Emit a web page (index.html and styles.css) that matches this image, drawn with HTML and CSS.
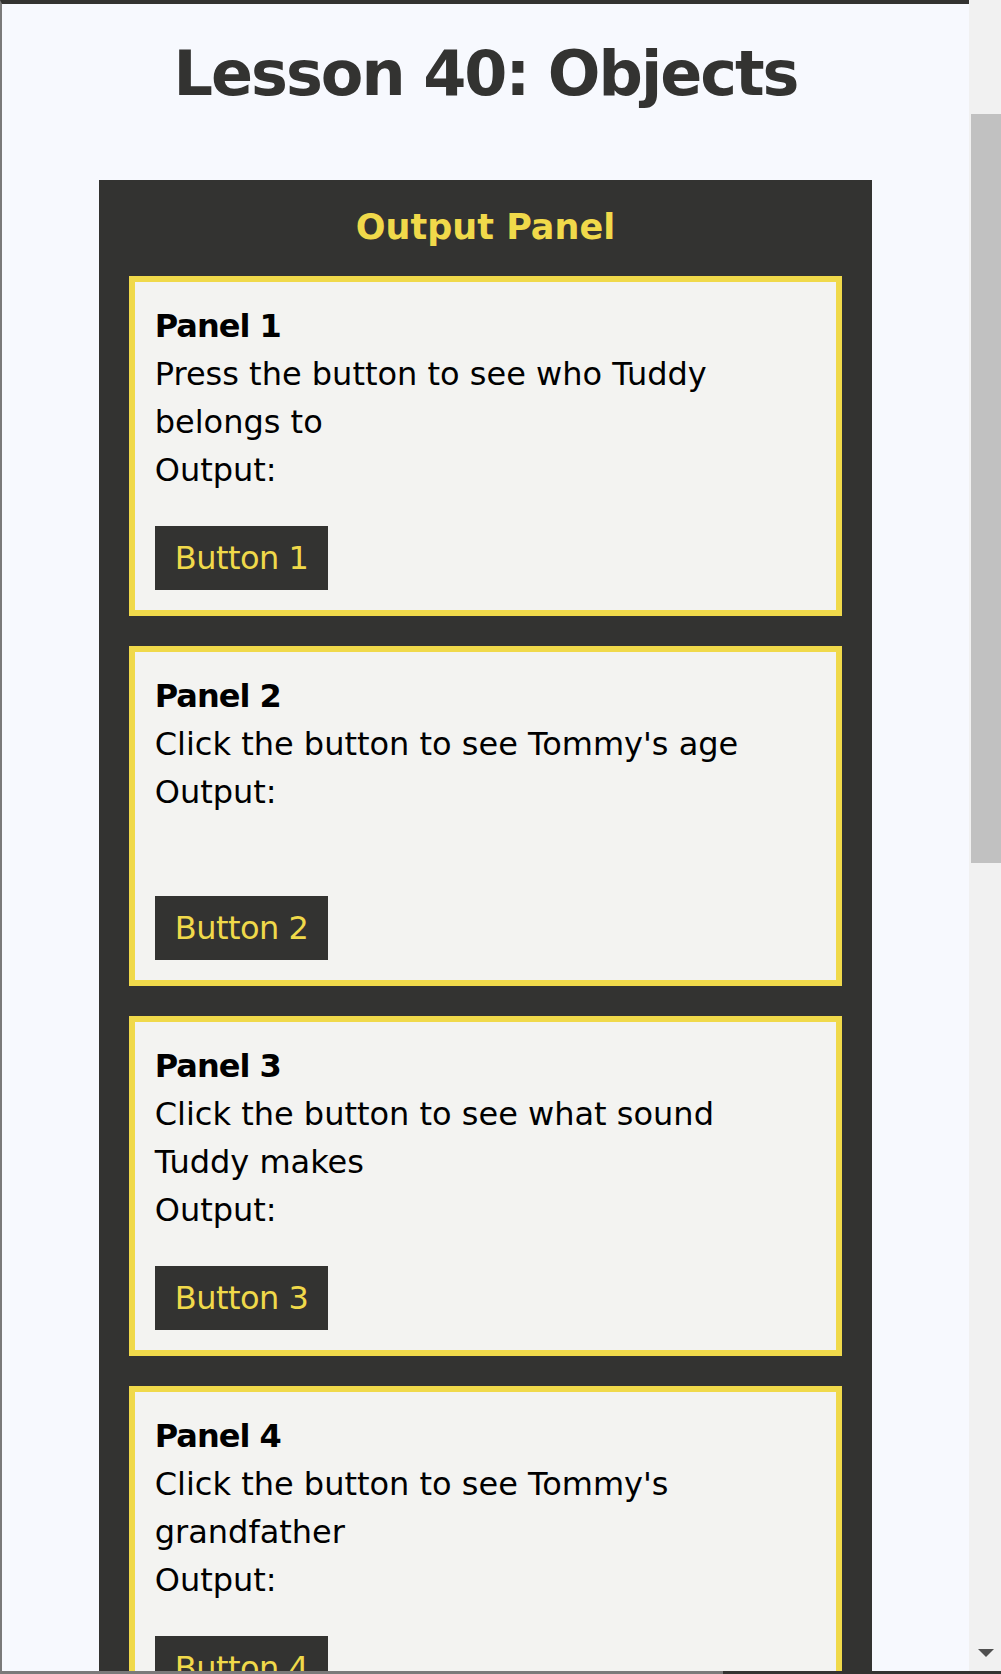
FILE: index.html
```html
<!DOCTYPE html>
<html lang="en">
<head>
    <meta charset="UTF-8">
    <meta name="viewport" content="width=device-width, initial-scale=1.0">
    <title>Lesson 40: Objects</title>
    <link rel="stylesheet" href="styles.css">
</head>
<body>
    <div class="screen">
        <div class="viewport">
            <div class="page">
                <h1>Lesson 40: Objects</h1>
                <div class="output-panel">
                    <h2>Output Panel</h2>

                    <div class="card">
                        <p class="card-title">Panel 1</p>
                        <p>Press the button to see who Tuddy belongs to</p>
                        <p>Output: <span id="output1"></span></p>
                        <button class="btn">Button 1</button>
                    </div>

                    <div class="card">
                        <p class="card-title">Panel 2</p>
                        <p>Click the button to see Tommy's age</p>
                        <p>Output: <span id="output2"></span></p>
                        <button class="btn">Button 2</button>
                    </div>

                    <div class="card">
                        <p class="card-title">Panel 3</p>
                        <p>Click the button to see what sound Tuddy makes</p>
                        <p>Output: <span id="output3"></span></p>
                        <button class="btn">Button 3</button>
                    </div>

                    <div class="card">
                        <p class="card-title">Panel 4</p>
                        <p>Click the button to see Tommy's grandfather</p>
                        <p>Output: <span id="output4"></span></p>
                        <button class="btn">Button 4</button>
                    </div>
                </div>
            </div>
            <div class="scrollbar">
                <div class="thumb"></div>
                <div class="arrow-down"></div>
            </div>
        </div>
        <div class="frame-bottom"></div>
    </div>
</body>
</html>
```

FILE: styles.css
```css
body {
    margin: 0;
    background-color: #f7f9fe;
    font-family: "DejaVu Sans", sans-serif;
}

.screen {
    height: 1674px;
    display: flex;
    flex-direction: column;
    overflow: hidden;
}

.viewport {
    flex: 1;
    min-height: 0;
    display: flex;
}

.page {
    width: 967px;
    border-top: 4px solid #333331;
    border-left: 2px solid #7a7a7a;
    background-color: #f7f9fe;
    overflow: hidden;
}

h1 {
    margin: 30px 0 66px;
    font-size: 62px;
    line-height: 80px;
    letter-spacing: -2px;
    text-align: center;
    color: #333331;
}

.output-panel {
    width: 80%;
    margin: 0 auto;
    padding: 23px 30px 30px;
    box-sizing: border-box;
    background-color: #333331;
}

h2 {
    margin: 0 0 25px;
    font-size: 35px;
    line-height: 48px;
    text-align: center;
    color: #f0d94a;
}

.card {
    height: 340px;
    box-sizing: border-box;
    margin-bottom: 30px;
    padding: 20px;
    border: 6px solid #f0d94a;
    background-color: #f3f3f1;
    display: flex;
    flex-direction: column;
    align-items: flex-start;
}

.card p {
    margin: 0;
    font-size: 32px;
    line-height: 48px;
    color: #000;
}

.card .card-title {
    font-weight: bold;
    letter-spacing: -1px;
}

.btn {
    margin-top: auto;
    padding: 12px 20px;
    border: none;
    background-color: #333331;
    color: #f0d94a;
    font-family: inherit;
    font-size: 32px;
    line-height: 40px;
    letter-spacing: -0.5px;
    cursor: pointer;
}

.scrollbar {
    width: 32px;
    background-color: #f1f1f1;
    display: flex;
    flex-direction: column;
    align-items: flex-end;
}

.thumb {
    width: 30px;
    height: 749px;
    margin-top: 114px;
    background-color: #c1c1c1;
}

.arrow-down {
    margin: auto 7px 14px 0;
    width: 0;
    height: 0;
    border-left: 8px solid transparent;
    border-right: 8px solid transparent;
    border-top: 8px solid #505050;
}

.frame-bottom {
    height: 3px;
    background: linear-gradient(to right, #7a7a7a 723px, #333331 723px);
}
```
